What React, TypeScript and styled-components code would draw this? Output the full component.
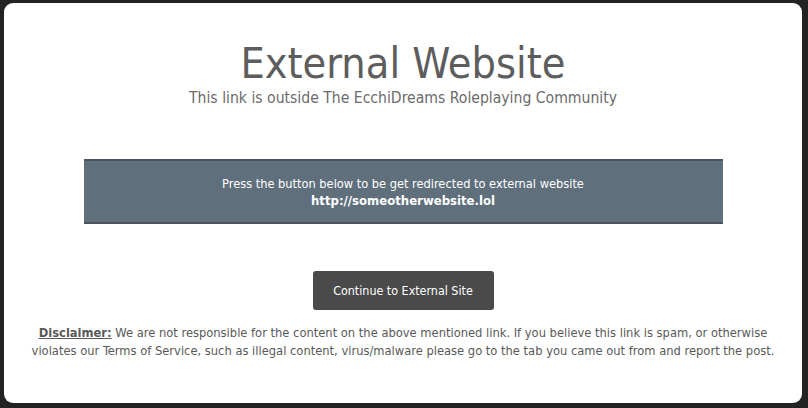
import React, { FC } from 'react';
import styled, { createGlobalStyle } from 'styled-components';

const GlobalStyle = createGlobalStyle`
    html, body {
        margin: 0;
        padding: 0;
        background: #232323;
    }
    body {
        font-family: "DejaVu Sans Condensed", "DejaVu Sans", sans-serif;
    }
`;

const Page = styled.div`
    width: 808px;
    height: 408px;
    box-sizing: border-box;
    padding: 3px 6px 5px 4px;
`;

const Panel = styled.main`
    height: 100%;
    background: #ffffff;
    border-radius: 9px;
    display: flex;
    flex-direction: column;
    align-items: center;
    padding: 35px 20px 0;
    box-sizing: border-box;
`;

const Title = styled.h1`
    margin: 0;
    font-size: 42.8px;
    font-weight: normal;
    line-height: 50px;
    color: #5d5d5d;
`;

const Subtitle = styled.p`
    margin: 0;
    font-size: 15.6px;
    line-height: 20px;
    color: #6b6b6b;
`;

const Banner = styled.section`
    margin-top: 51px;
    width: 639px;
    height: 65px;
    box-sizing: border-box;
    background: #5f6f7c;
    border-top: 2px solid #4b545c;
    border-bottom: 2px solid #4b545c;
    display: flex;
    flex-direction: column;
    justify-content: center;
    align-items: center;
    color: #ffffff;
`;

const BannerText = styled.span`
    font-size: 12.7px;
    line-height: 17px;
`;

const BannerUrl = styled.strong`
    font-size: 13px;
    line-height: 17px;
    font-weight: bold;
`;

const ContinueButton = styled.button`
    margin-top: 47px;
    width: 181px;
    height: 39px;
    border: 0;
    border-radius: 3px;
    background: #4a4a4a;
    color: #ffffff;
    font-family: inherit;
    font-size: 12.4px;
    cursor: pointer;
`;

const Disclaimer = styled.p`
    margin: 14px 0 0;
    max-width: 756px;
    text-align: center;
    font-size: 12.8px;
    line-height: 18px;
    color: #595959;
`;

const Label = styled.span`
    font-weight: bold;
    text-decoration: underline;
`;

const App: FC = () => {
    const url = 'http://someotherwebsite.lol';

    return (
        <>
            <GlobalStyle />
            <Page>
                <Panel>
                    <Title>External Website</Title>
                    <Subtitle>This link is outside The EcchiDreams Roleplaying Community</Subtitle>
                    <Banner>
                        <BannerText>Press the button below to be get redirected to external website</BannerText>
                        <BannerUrl>{url}</BannerUrl>
                    </Banner>
                    <ContinueButton>Continue to External Site</ContinueButton>
                    <Disclaimer>
                        <Label>Disclaimer:</Label> We are not responsible for the content on the above mentioned link. If you believe this link is spam, or otherwise violates our Terms of Service, such as illegal content, virus/malware please go to the tab you came out from and report the post.
                    </Disclaimer>
                </Panel>
            </Page>
        </>
    );
}
export default App;
